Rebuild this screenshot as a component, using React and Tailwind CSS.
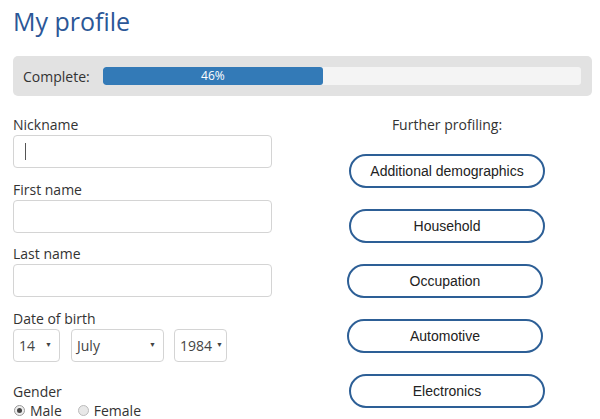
const fields = ["Nickname", "First name", "Last name"];

const sections = [
  { label: "Additional demographics", shift: "ml-[2px]" },
  { label: "Household", shift: "ml-[2px]" },
  { label: "Occupation", shift: "ml-0" },
  { label: "Automotive", shift: "ml-0" },
  { label: "Electronics", shift: "ml-[2px]" },
];

const Select = ({ value, width, pad }) => (
  <div
    className={`flex items-center justify-between h-[33px] ${width} pl-[5px] ${pad} border border-[#d4d4d4] rounded-[4px] bg-white text-[14px] text-[#444]`}
  >
    <span>{value}</span>
    <span className="text-[7px] text-[#444]">▼</span>
  </div>
);

const App = () => {
  const progress = 46;
  return (
    <div className="w-[600px] h-[419px] bg-white overflow-hidden font-['Open_Sans',sans-serif] text-[#333]">
      {/* Header */}
      <h1 className="pl-[13px] pt-[6px] text-[25px] leading-[31px] text-[#2b5797]">
        My profile
      </h1>

      {/* Progress */}
      <div className="mx-[13px] mt-[19px] h-[40px] w-[579px] flex items-center bg-[#e2e2e2] rounded-[5px] pl-[10px] pr-[11px]">
        <span className="w-[80px] text-[14px] text-[#333]">Complete:</span>
        <div className="flex-1 h-[18px] bg-[#f4f4f4] rounded-[3px] overflow-hidden">
          <div
            className="h-full bg-[#337ab7] rounded-[3px] flex items-center justify-center text-[12px] text-white"
            style={{ width: `${progress}%` }}
          >
            {progress}%
          </div>
        </div>
      </div>

      <div className="flex pl-[13px] mt-[19px]">
        {/* Left form */}
        <div className="w-[259px]">
          {fields.map((f, i) => (
            <div key={f} className="mb-[11.5px]">
              <div className="text-[14px] leading-[20px] text-[#333]">{f}</div>
              <div className="relative h-[33px] border border-[#d4d4d4] rounded-[4px] bg-white">
                {i === 0 && (
                  <span className="absolute left-[11px] top-[7px] w-px h-[17px] bg-[#555]" />
                )}
              </div>
            </div>
          ))}

          <div className="text-[14px] leading-[20px] text-[#333]">Date of birth</div>
          <div className="flex">
            <Select value="14" width="w-[47px]" pad="pr-[7px]" />
            <div className="ml-[11px]">
              <Select value="July" width="w-[93px]" pad="pr-[7px]" />
            </div>
            <div className="ml-[10px]">
              <Select value="1984" width="w-[53px]" pad="pr-[3px]" />
            </div>
          </div>

          <div className="mt-[20px] text-[14px] leading-[20px] text-[#333]">Gender</div>
          <div className="flex items-center h-[18px] text-[14px] text-[#333]">
            <span className="w-[11px] h-[11px] ml-[1px] rounded-full border border-[#999] bg-[#eee] flex items-center justify-center">
              <span className="w-[5px] h-[5px] rounded-full bg-[#444]" />
            </span>
            <span className="ml-[5px]">Male</span>
            <span className="ml-[16px] w-[11px] h-[11px] rounded-full border border-[#bbb] bg-[#e8e8e8]" />
            <span className="ml-[5px]">Female</span>
          </div>
        </div>

        {/* Right column */}
        <div className="ml-[75px] w-[200px] flex flex-col">
          <div className="text-center text-[14px] leading-[20px] text-[#333]">
            Further profiling:
          </div>
          <div className="mt-[19px] flex flex-col gap-[21px]">
            {sections.map((s) => (
              <button
                key={s.label}
                className={`${s.shift} w-[196px] h-[34px] rounded-full border-2 border-[#2d5f96] bg-white font-['Liberation_Sans',Arial,sans-serif] text-[14px] text-[#222]`}
              >
                {s.label}
              </button>
            ))}
          </div>
        </div>
      </div>
    </div>
  );
};

export default App;
